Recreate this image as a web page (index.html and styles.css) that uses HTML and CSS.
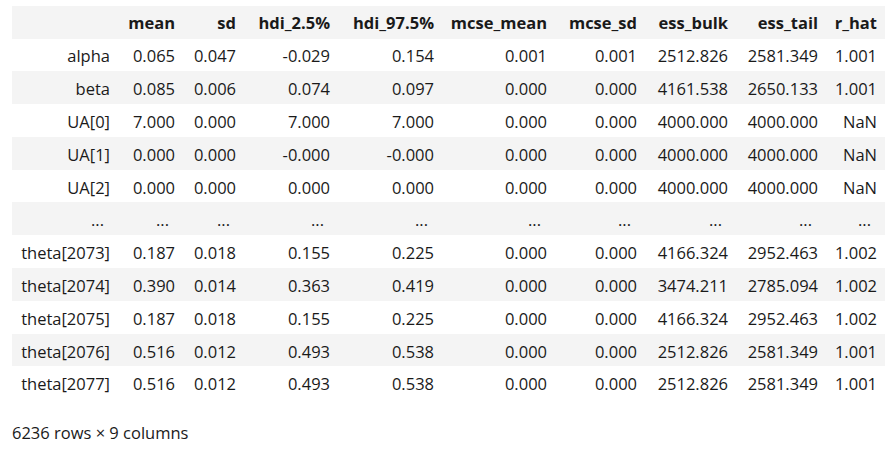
FILE: index.html
```html
<!DOCTYPE html>
<html>
<head>
<meta charset="utf-8">
<link rel="stylesheet" href="styles.css">
</head>
<body>
<div class="output">
<table class="dataframe">
<colgroup>
<col class="w-idx"><col class="w-mean"><col class="w-sd"><col class="w-h1"><col class="w-h2"><col class="w-mm"><col class="w-ms"><col class="w-eb"><col class="w-et"><col class="w-rh">
</colgroup>
<thead>
<tr><th></th><th>mean</th><th>sd</th><th>hdi_2.5%</th><th>hdi_97.5%</th><th>mcse_mean</th><th>mcse_sd</th><th>ess_bulk</th><th>ess_tail</th><th>r_hat</th></tr>
</thead>
<tbody>
<tr><th>alpha</th><td>0.065</td><td>0.047</td><td>-0.029</td><td>0.154</td><td>0.001</td><td>0.001</td><td>2512.826</td><td>2581.349</td><td>1.001</td></tr>
<tr><th>beta</th><td>0.085</td><td>0.006</td><td>0.074</td><td>0.097</td><td>0.000</td><td>0.000</td><td>4161.538</td><td>2650.133</td><td>1.001</td></tr>
<tr><th>UA[0]</th><td>7.000</td><td>0.000</td><td>7.000</td><td>7.000</td><td>0.000</td><td>0.000</td><td>4000.000</td><td>4000.000</td><td>NaN</td></tr>
<tr><th>UA[1]</th><td>0.000</td><td>0.000</td><td>-0.000</td><td>-0.000</td><td>0.000</td><td>0.000</td><td>4000.000</td><td>4000.000</td><td>NaN</td></tr>
<tr><th>UA[2]</th><td>0.000</td><td>0.000</td><td>0.000</td><td>0.000</td><td>0.000</td><td>0.000</td><td>4000.000</td><td>4000.000</td><td>NaN</td></tr>
<tr class="gap"><th>...</th><td>...</td><td>...</td><td>...</td><td>...</td><td>...</td><td>...</td><td>...</td><td>...</td><td>...</td></tr>
<tr><th>theta[2073]</th><td>0.187</td><td>0.018</td><td>0.155</td><td>0.225</td><td>0.000</td><td>0.000</td><td>4166.324</td><td>2952.463</td><td>1.002</td></tr>
<tr><th>theta[2074]</th><td>0.390</td><td>0.014</td><td>0.363</td><td>0.419</td><td>0.000</td><td>0.000</td><td>3474.211</td><td>2785.094</td><td>1.002</td></tr>
<tr><th>theta[2075]</th><td>0.187</td><td>0.018</td><td>0.155</td><td>0.225</td><td>0.000</td><td>0.000</td><td>4166.324</td><td>2952.463</td><td>1.002</td></tr>
<tr><th>theta[2076]</th><td>0.516</td><td>0.012</td><td>0.493</td><td>0.538</td><td>0.000</td><td>0.000</td><td>2512.826</td><td>2581.349</td><td>1.001</td></tr>
<tr><th>theta[2077]</th><td>0.516</td><td>0.012</td><td>0.493</td><td>0.538</td><td>0.000</td><td>0.000</td><td>2512.826</td><td>2581.349</td><td>1.001</td></tr>
</tbody>
</table>
<p class="shape">6236 rows × 9 columns</p>
</div>
</body>
</html>
```

FILE: styles.css
```css
html, body {
  margin: 0;
  padding: 0;
  background: #ffffff;
}

body {
  font-family: "Open Sans", "Noto Sans", "Liberation Sans", sans-serif;
  font-size: 16.5px;
  color: #1a1a1a;
}

.output {
  padding: 6px 0 0 12px;
}

.dataframe {
  border-collapse: collapse;
  border-spacing: 0;
  table-layout: fixed;
  width: 873px;
}

.w-idx { width: 106px; }
.w-mean { width: 65px; }
.w-sd { width: 61px; }
.w-h1 { width: 94px; }
.w-h2 { width: 104px; }
.w-mm { width: 113px; }
.w-ms { width: 90px; }
.w-eb { width: 91px; }
.w-et { width: 90px; }
.w-rh { width: 59px; }

.dataframe th,
.dataframe td {
  box-sizing: border-box;
  padding: 3px 8px 0 0;
  height: 32.8px;
  line-height: 20px;
  text-align: right;
  white-space: nowrap;
  vertical-align: middle;
  border: none;
}

.dataframe thead th {
  font-weight: 700;
  height: 32.5px;
  padding-top: 2px;
}

.dataframe tbody th {
  font-weight: 400;
}

.dataframe thead tr,
.dataframe tbody tr:nth-child(even) {
  background: #f4f4f4;
}

.dataframe .gap th,
.dataframe .gap td {
  padding-right: 14px;
}

.shape {
  margin: 23px 0 0 0;
  line-height: 22px;
}
```
